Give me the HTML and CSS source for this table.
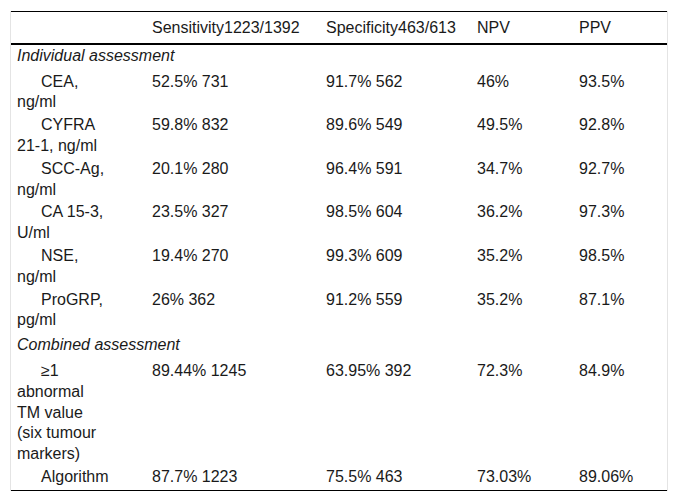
FILE: index.html
```html
<!DOCTYPE html>
<html>
<head>
<meta charset="utf-8">
<link rel="stylesheet" href="styles.css">
</head>
<body>
<div class="wrap">
<table class="tbl">
<colgroup>
<col class="c1"><col class="c2"><col class="c3"><col class="c4"><col class="c5">
</colgroup>
<thead>
<tr><th></th><th>Sensitivity1223/1392</th><th>Specificity463/613</th><th>NPV</th><th>PPV</th></tr>
</thead>
<tbody>
<tr class="sec"><td colspan="5">Individual assessment</td></tr>
<tr><td class="lab">CEA, ng/ml</td><td>52.5% 731</td><td>91.7% 562</td><td>46%</td><td>93.5%</td></tr>
<tr><td class="lab">CYFRA 21-1, ng/ml</td><td>59.8% 832</td><td>89.6% 549</td><td>49.5%</td><td>92.8%</td></tr>
<tr><td class="lab">SCC-Ag, ng/ml</td><td>20.1% 280</td><td>96.4% 591</td><td>34.7%</td><td>92.7%</td></tr>
<tr><td class="lab">CA 15-3, U/ml</td><td>23.5% 327</td><td>98.5% 604</td><td>36.2%</td><td>97.3%</td></tr>
<tr><td class="lab">NSE, ng/ml</td><td>19.4% 270</td><td>99.3% 609</td><td>35.2%</td><td>98.5%</td></tr>
<tr><td class="lab">ProGRP, pg/ml</td><td>26% 362</td><td>91.2% 559</td><td>35.2%</td><td>87.1%</td></tr>
<tr class="sec sec-next"><td colspan="5">Combined assessment</td></tr>
<tr><td class="lab">≥1 abnormal TM value (six tumour markers)</td><td>89.44% 1245</td><td>63.95% 392</td><td>72.3%</td><td>84.9%</td></tr>
<tr class="last"><td class="lab">Algorithm</td><td>87.7% 1223</td><td>75.5% 463</td><td>73.03%</td><td>89.06%</td></tr>
</tbody>
</table>
</div>
</body>
</html>
```
FILE: styles.css
```css
html, body {
  margin: 0;
  padding: 0;
  background: #fff;
}
body {
  font-family: "Liberation Sans", Arial, sans-serif;
  font-size: 16px;
  color: #1a1a1a;
}
.wrap {
  margin: 11px 0 0 10px;
  width: 656px;
  border-left: 1px solid #e4e4e4;
  border-right: 1px solid #e4e4e4;
}
.tbl {
  width: 656px;
  table-layout: fixed;
  border-collapse: collapse;
  border-top: 1px solid #000;
  border-bottom: 1px solid #000;
  line-height: 20.8px;
}
.c1 { width: 135px; }
.c2 { width: 174px; }
.c3 { width: 151px; }
.c4 { width: 102px; }
.c5 { width: 94px; }
.tbl th {
  font-weight: normal;
  text-align: left;
  padding: 6px 4px 4px 6px;
  vertical-align: top;
  border-bottom: 2px solid #000;
  white-space: nowrap;
}
.tbl td {
  padding: 1px 4px 1px 6px;
  vertical-align: top;
  text-align: left;
}
.tbl td.lab {
  padding-right: 36px;
  text-indent: 24px;
}
.sec td {
  font-style: italic;
  padding-top: 1px;
  padding-bottom: 4px;
}
.sec-next td { padding-top: 3px; }
.last td { padding-bottom: 2px; }
```
